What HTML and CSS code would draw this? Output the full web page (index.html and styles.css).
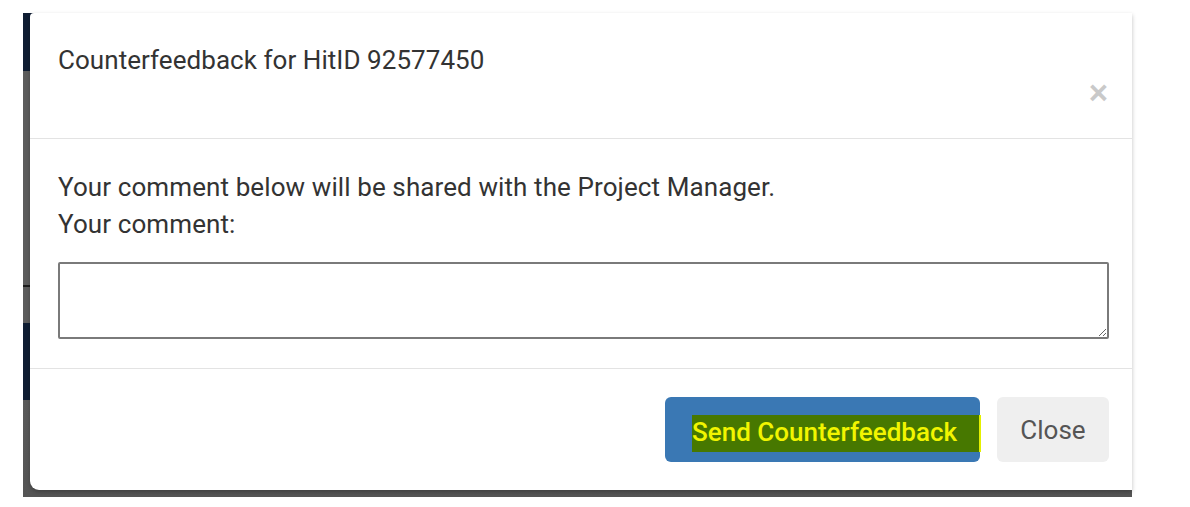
FILE: index.html
```html
<!DOCTYPE html>
<html lang="en">
<head>
  <meta charset="UTF-8" />
  <title>Counterfeedback</title>
  <link rel="stylesheet" href="styles.css">
</head>
<body>
  <div class="backdrop">
    <div class="modal">
      <div class="modal-header">
        <h4 class="modal-title">Counterfeedback for HitID 92577450</h4>
        <button type="button" class="close">&times;</button>
      </div>
      <div class="modal-body">
        <p>Your comment below will be shared with the Project Manager.</p>
        <label for="comment">Your comment:</label>
        <textarea id="comment" rows="2"></textarea>
      </div>
      <div class="modal-footer">
        <button type="button" class="btn btn-primary"><span class="mark">Send Counterfeedback</span></button>
        <button type="button" class="btn btn-default">Close</button>
      </div>
    </div>
  </div>
</body>
</html>
```

FILE: styles.css
```css
body {
  margin: 0;
  background-color: #fff;
  font-family: Roboto, 'Liberation Sans', sans-serif;
  color: #333;
}
.backdrop {
  margin: 13px 0 0 23px;
  width: 1109px;
  height: 484px;
  padding-left: 7px;
  box-sizing: border-box;
  background: linear-gradient(to bottom,
    #0f1d33 0, #0f1d33 58px,
    #5c5c5c 58px, #5c5c5c 272px,
    #1c1c1c 272px, #1c1c1c 274px,
    #5c5c5c 274px, #5c5c5c 310px,
    #0f1d33 310px, #0f1d33 387px,
    #5a5a5a 387px, #555 484px);
}
.modal {
  background-color: #fff;
  height: 477px;
  border-radius: 4px 0 0 9px;
  box-shadow: 0 2px 4px rgba(0, 0, 0, 0.25);
}
.modal-header {
  display: flex;
  justify-content: space-between;
  height: 126px;
  padding: 30px 24px 0 28px;
  box-sizing: border-box;
  border-bottom: 1px solid #e3e3e3;
}
.modal-title {
  margin: 0;
  font-size: 26px;
  font-weight: normal;
  line-height: 34px;
  letter-spacing: 0.05px;
}
.close {
  margin-top: 33px;
  padding: 0;
  height: 34px;
  border: none;
  background: none;
  font-family: 'Liberation Sans', sans-serif;
  font-size: 33px;
  font-weight: bold;
  line-height: 34px;
  color: #c9c9c9;
  cursor: pointer;
}
.modal-body {
  padding: 30px 23px 29px 28px;
  font-size: 26px;
  line-height: 37px;
  letter-spacing: 0.1px;
}
.modal-body p {
  margin: 0;
}
.modal-body label {
  display: block;
}
textarea {
  display: block;
  width: 100%;
  height: 77px;
  margin-top: 19px;
  box-sizing: border-box;
  border: 2px solid #7a7a7a;
  border-radius: 2px;
}
.modal-footer {
  display: flex;
  justify-content: flex-end;
  gap: 17px;
  padding: 28px 23px 28px 28px;
  border-top: 1px solid #e3e3e3;
}
.btn {
  height: 65px;
  border: none;
  border-radius: 6px;
  font-family: Roboto, 'Liberation Sans', sans-serif;
  font-size: 26px;
  cursor: pointer;
}
.btn-primary {
  width: 315px;
  padding: 8px 0 0 27px;
  background-color: #3a78b4;
  text-align: left;
}
.mark {
  display: block;
  width: 289px;
  height: 37px;
  line-height: 35px;
  box-sizing: border-box;
  background-color: #477800;
  border-right: 2px solid #e4f000;
  color: #f2f500;
  font-weight: 500;
}
.btn-default {
  width: 112px;
  background-color: #efefef;
  color: #555;
}
```
